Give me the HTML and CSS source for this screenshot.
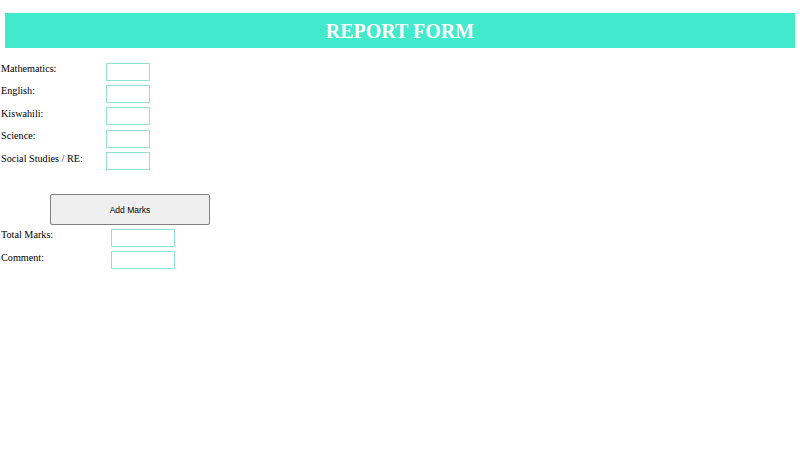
FILE: index.html
```html
<!DOCTYPE html>
<html>
<head>
<meta charset="utf-8">
<link rel="stylesheet" href="styles.css">
</head>
<body>
<header class="banner"><h1 class="title">REPORT FORM</h1></header>
<form class="form">
  <div class="row"><label class="label">Mathematics:</label><input class="box" type="text"></div>
  <div class="row"><label class="label">English:</label><input class="box" type="text"></div>
  <div class="row"><label class="label">Kiswahili:</label><input class="box" type="text"></div>
  <div class="row"><label class="label">Science:</label><input class="box" type="text"></div>
  <div class="row"><label class="label">Social Studies / RE:</label><input class="box" type="text"></div>
  <button class="btn" type="button">Add Marks</button>
  <div class="row"><label class="label wide">Total Marks:</label><input class="box long" type="text"></div>
  <div class="row"><label class="label wide">Comment:</label><input class="box long" type="text"></div>
</form>
</body>
</html>
```
FILE: styles.css
```css
html, body { margin: 0; padding: 0; background: #fff; }
body { font-family: "Liberation Serif", "Times New Roman", serif; color: #000; }
.banner {
  margin: 13px 5px 0;
  height: 35px;
  background: #40eacb;
  display: flex;
  align-items: center;
  justify-content: center;
}
.title {
  margin: 0;
  padding-top: 2px;
  font-size: 20px;
  font-weight: bold;
  color: #fff;
  line-height: 33px;
}
.form { display: flex; flex-direction: column; align-items: flex-start; padding-top: 14.5px; }
.row { display: flex; align-items: flex-start; height: 18px; margin-bottom: 4.4px; }
.label { width: 105px; padding-left: 1px; font-size: 10.2px; line-height: 11.5px; margin-top: 0.5px; }
.label.wide { width: 110px; }
.box {
  box-sizing: border-box;
  width: 44px; height: 18px;
  margin: 0; padding: 0;
  border: 1px solid #93e2d6;
  background: #fff;
  outline: none;
}
.box.long { width: 64px; }
.btn {
  box-sizing: border-box;
  margin: 19.5px 0 4px 50px;
  width: 160px; height: 31px;
  background: #efefef;
  border: 1px solid #808080;
  border-radius: 2px;
  font-family: "Liberation Sans", Arial, sans-serif;
  font-size: 8.5px;
  color: #000;
  padding: 2px 0 0;
}
```
